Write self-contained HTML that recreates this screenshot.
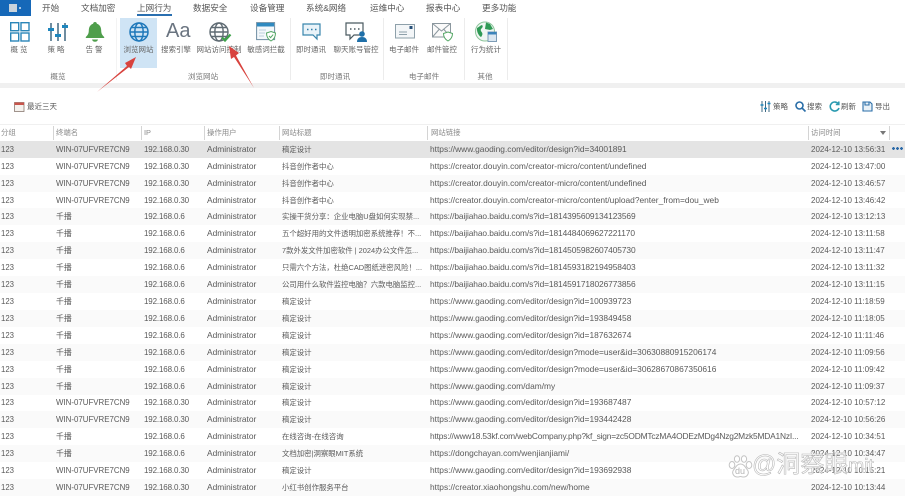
<!DOCTYPE html>
<html lang="zh"><head><meta charset="utf-8"><title>上网行为</title>
<style>
html,body{margin:0;padding:0;width:905px;height:500px;overflow:hidden;background:#fff}
body{position:relative;font-family:"Liberation Sans","Noto Sans CJK SC",sans-serif;color:#5a5a5a;font-size:7.5px}
#w{position:absolute;left:0;top:0;width:905px;height:500px;filter:blur(.35px)}
.a{position:absolute;white-space:nowrap}
.t{position:absolute;top:1px;font-size:8.6px;line-height:14px;color:#555;white-space:nowrap}
.l{position:absolute;top:44px;font-size:7.5px;line-height:11px;color:#666;white-space:nowrap;text-align:center;transform:translateX(-50%)}
.g{position:absolute;top:71px;font-size:7.6px;line-height:11px;color:#777;white-space:nowrap;transform:translateX(-50%)}
.s{position:absolute;top:18px;width:1px;height:62px;background:#ececec}
.h{position:absolute;top:126px;width:1px;height:14px;background:#d4d4d4}
.ht{position:absolute;top:127px;line-height:12px;font-size:7.4px;color:#8a8a8a;white-space:nowrap}
.r{position:absolute;left:0;width:905px;height:17px;line-height:17px;white-space:nowrap}
.r span{position:absolute;top:0}
.r span:nth-child(1){left:1px;font-size:7.8px}
.r span:nth-child(2){left:56px;font-size:7.9px}
.r span:nth-child(3){left:144px;font-size:8px;letter-spacing:-.15px}
.r span:nth-child(4){left:207px;font-size:8.4px}
.r span:nth-child(5){left:282px;font-size:7.4px}
.r span:nth-child(6){left:430px;font-size:8.4px}
.r span:nth-child(7){left:811px;font-size:8px}
.r.b span:nth-child(6){letter-spacing:-.1px}
.r.k span:nth-child(6){letter-spacing:-.18px}
.z{background:#fafafa}
svg{position:absolute;overflow:visible}
</style></head><body><div id="w">

<div class="a" style="left:0;top:0;width:31px;height:16px;background:#1668b8"></div>
<div class="a" style="left:9px;top:4px;width:8px;height:8px;background:#c9d3dc"></div>
<div class="a" style="left:19px;top:7px;width:2px;height:2px;background:#a9c6e4"></div>
<div class="t" style="left:42px">开始</div>
<div class="t" style="left:81px">文档加密</div>
<div class="t" style="left:137px">上网行为</div>
<div class="a" style="left:137px;top:14px;width:35px;height:2px;background:#2a6fb0"></div>
<div class="t" style="left:193px">数据安全</div>
<div class="t" style="left:250px">设备管理</div>
<div class="t" style="left:306px">系统&amp;网络</div>
<div class="t" style="left:370px">运维中心</div>
<div class="t" style="left:426px">报表中心</div>
<div class="t" style="left:482px">更多功能</div>

<div class="a" style="left:120px;top:18px;width:37px;height:50px;background:#cfe4f5"></div>
<div class="s" style="left:116px;background:#f3f3f3"></div><div class="s" style="left:290px"></div><div class="s" style="left:383px"></div><div class="s" style="left:464px"></div><div class="s" style="left:507px"></div>
<div class="a" style="left:0;top:83px;width:905px;height:5px;background:#f0f0f0"></div>

<!-- icons -->
<svg style="left:10px;top:22px" width="20" height="20" fill="none" stroke="#2b86b8" stroke-width="1.4"><rect x=".7" y=".7" width="8" height="8"/><rect x="11" y=".7" width="8" height="8"/><rect x=".7" y="11" width="8" height="8"/><rect x="11" y="11" width="8" height="8"/></svg>
<svg style="left:48px;top:22px" width="20" height="20" stroke="#24506e" stroke-width="1.3" fill="#1e86bd"><path d="M3 1V19M10 1V19M17 1V19" fill="none"/><rect x="0" y="6" width="6" height="3" stroke="none"/><rect x="7" y="12" width="6" height="3" stroke="none"/><rect x="14" y="3" width="6" height="3" stroke="none"/></svg>
<svg style="left:85px;top:22px" width="20" height="20" fill="#4f9e4c"><path d="M10 0c1.2 0 1.8.8 1.9 1.8 3 .9 4.2 3.6 4.3 6.6 0 3.500 1.300 5 3 6.600v1H.8v-1c1.700-1.600 3-3.100 3-6.600.1-3 1.300-5.700 4.300-6.600C8.200.8 8.800 0 10 0z"/><path d="M7 17.500h6c-.4 1.500-1.500 2.300-3 2.300s-2.600-.8-3-2.300z"/></svg>
<svg style="left:129px;top:22px" width="20" height="20" fill="none" stroke="#1f78ba" stroke-width="1.500"><circle cx="10" cy="10" r="9"/><ellipse cx="10" cy="10" rx="4.200" ry="9"/><path d="M1 10H19M2.400 5.500H17.600M2.400 14.500H17.600"/></svg>
<div class="a" style="left:166px;top:19px;font-size:20px;line-height:24px;color:#6a7480">Aa</div>
<svg style="left:209px;top:22px" width="23" height="21" fill="none" stroke="#5f6b73" stroke-width="1.400"><circle cx="10" cy="10" r="9"/><ellipse cx="10" cy="10" rx="4.200" ry="9"/><path d="M1 10H19M2.400 5.500H17.600M2.400 14.500H17.600"/><path d="M13 15.500l3 3 5.500-6" stroke="#3ea24a" stroke-width="2.200"/></svg>
<svg style="left:256px;top:22px" width="21" height="21" fill="none"><rect x=".6" y=".6" width="18" height="17" fill="#f4f8fb" stroke="#6f8ea3"/><rect x="1" y="1" width="17" height="3.500" fill="#2f8ac0"/><path d="M3 8H10M3 11H9M3 14H8" stroke="#bcd0dd"/><path d="M15 9.500l4.500 1.500c0 4-1.800 6.500-4.500 8-2.700-1.500-4.500-4-4.500-8z" fill="#fff" stroke="#55a866"/><path d="M13 14l1.600 1.600 2.600-3" stroke="#55a866"/></svg>
<svg style="left:302px;top:23px" width="20" height="18" fill="#e9f3f9" stroke="#3a86ad" stroke-width="1.200"><path d="M1 1H18V12H15V16L11 12H1z"/><path d="M5 6.500h1.500M9 6.500h1.500M13 6.500h1.500" stroke="#2f7da8" stroke-width="1.600" fill="none"/></svg>
<svg style="left:345px;top:22px" width="22" height="20" fill="#fff" stroke="#4b5a60" stroke-width="1.200"><path d="M1 1H18V13H9L5 17V13H1z"/><path d="M5 7h1.500M9 7h1.500M13 7h1.500" stroke="#4b5a60" stroke-width="1.600" fill="none"/><circle cx="17" cy="12" r="2.800" fill="#1f6fa8" stroke="none"/><path d="M12 20c0-3.500 2-5 5-5s5 1.500 5 5z" fill="#1f6fa8" stroke="none"/></svg>
<svg style="left:395px;top:24px" width="20" height="15" fill="#f3f6f8" stroke="#8ea0aa"><rect x=".5" y=".5" width="19" height="13.500"/><rect x="14.500" y="2" width="3" height="3" fill="#274f78" stroke="none"/><path d="M4 8H12M4 10.500H12" fill="none"/></svg>
<svg style="left:432px;top:23px" width="22" height="19" fill="#fafafa" stroke="#8b979e"><rect x=".5" y=".5" width="18" height="13.500"/><path d="M.5 .5L9.500 8 18.500 .5M.5 14L7 6.500M18.500 14L12 6.500" fill="none"/><path d="M16 9l4.500 1.500c0 3.500-1.800 6-4.500 7.500-2.700-1.500-4.500-4-4.500-7.500z" fill="#fff" stroke="#55a866"/></svg>
<svg style="left:475px;top:21px" width="22" height="22"><circle cx="10" cy="10.500" r="9.500" fill="#f0f6f2" stroke="#8cc49a"/><path d="M2 7c2-1 4-3 5-3 1 1 1 2-.5 3.500C5 9 6 10 7 11.500 8 13 7 15 6 16 4 15 1.500 11 2 7z" fill="#2f9a55"/><path d="M11 1.500l4 1.500 3 5-3 1-5-1z" fill="#2f9a55"/><rect x="13" y="11" width="8.500" height="9.500" fill="#dbe7f1" stroke="#7c9bb5"/><rect x="13" y="11" width="8.500" height="2.500" fill="#3c84bb"/></svg>

<div class="l" style="left:20px;letter-spacing:2px">概览</div>
<div class="l" style="left:57px;letter-spacing:2px">策略</div>
<div class="l" style="left:95px;letter-spacing:2px">告警</div>
<div class="l" style="left:138.500px">浏览网站</div>
<div class="l" style="left:176px">搜索引擎</div>
<div class="l" style="left:219px">网站访问控制</div>
<div class="l" style="left:266px">敏感词拦截</div>
<div class="l" style="left:311px">即时通讯</div>
<div class="l" style="left:356px">聊天账号管控</div>
<div class="l" style="left:404px">电子邮件</div>
<div class="l" style="left:442px">邮件管控</div>
<div class="l" style="left:486px">行为统计</div>
<div class="g" style="left:58px">概览</div>
<div class="g" style="left:203px">浏览网站</div>
<div class="g" style="left:335px">即时通讯</div>
<div class="g" style="left:424px">电子邮件</div>
<div class="g" style="left:485px">其他</div>

<!-- arrows -->
<svg style="left:0;top:0" width="905" height="100"><path d="M97 92L127 66 125 63 136 57 131 69 129 67z" fill="#d8433e"/><path d="M254 88L234 57 231 59 229 46 239 53 236 55.500z" fill="#d8433e"/></svg>

<!-- toolbar -->
<svg style="left:14px;top:101px" width="11" height="11" fill="#f5f2ee" stroke="#8a7a72" stroke-width=".8"><rect x=".5" y="1.500" width="9.500" height="9"/><rect x=".5" y="1.500" width="9.500" height="2.500" fill="#c8554c" stroke="none"/></svg>
<div class="a" style="left:27px;top:101px;line-height:12px;color:#555">最近三天</div>
<svg style="left:760px;top:101px" width="11" height="11" stroke="#3f6b85" fill="none"><path d="M2 0V11M5.500 0V11M9 0V11"/><path d="M.5 4H3.500M4 7.500H7M7.500 2.500H10.500" stroke="#1e86bd" stroke-width="1.500"/></svg>
<div class="a" style="left:773px;top:101px;line-height:12px;color:#555">策略</div>
<svg style="left:795px;top:101px" width="11" height="11" fill="none" stroke="#2a6ea8" stroke-width="1.600"><circle cx="4.500" cy="4.500" r="3.500"/><path d="M7 7L10.500 10.500"/></svg>
<div class="a" style="left:807px;top:101px;line-height:12px;color:#555">搜索</div>
<svg style="left:829px;top:101px" width="11" height="11" fill="none" stroke="#2a9ab0" stroke-width="1.600"><path d="M9.500 3A4.500 4.500 0 1 0 10 7"/><path d="M9.800 .5V3.500H6.800"/></svg>
<div class="a" style="left:841px;top:101px;line-height:12px;color:#555">刷新</div>
<svg style="left:862px;top:101px" width="11" height="11" fill="#e9f1f7" stroke="#2a6ea8" stroke-width="1.100"><path d="M1 1H8L10 3V10H1z"/><path d="M3 1V4H7V1" fill="none"/></svg>
<div class="a" style="left:875px;top:101px;line-height:12px;color:#555">导出</div>

<!-- header -->
<div class="a" style="left:0;top:124px;width:905px;height:1px;background:#f0f0f0"></div>
<div class="a" style="left:0;top:141px;width:905px;height:1px;background:#c4c4c4"></div>
<div class="h" style="left:53px"></div><div class="h" style="left:141px"></div><div class="h" style="left:204px"></div><div class="h" style="left:279px"></div><div class="h" style="left:427px"></div><div class="h" style="left:808px"></div><div class="h" style="left:889px"></div>
<div class="ht" style="left:1px">分组</div><div class="ht" style="left:56px">终端名</div><div class="ht" style="left:144px">IP</div><div class="ht" style="left:207px">操作用户</div><div class="ht" style="left:282px">网站标题</div><div class="ht" style="left:431px">网站链接</div><div class="ht" style="left:811px">访问时间</div>
<div class="a" style="left:880px;top:131px;width:0;height:0;border:3px solid transparent;border-top:4px solid #777"></div>

<!-- rows -->
<div class="r" style="top:141px;background:#e4e4e4;height:17px"><span>123</span><span>WIN-07UFVRE7CN9</span><span>192.168.0.30</span><span>Administrator</span><span>稿定设计</span><span>https://www.gaoding.com/editor/design?id=34001891</span><span>2024-12-10 13:56:31</span></div>
<div class="a" style="left:892px;top:147px;width:11px;height:3px;background:radial-gradient(circle at 1.500px 1.500px,#2c6aa8 1.300px,transparent 1.500px) 0 0/4px 3px"></div>
<div class="r" style="top:158px"><span>123</span><span>WIN-07UFVRE7CN9</span><span>192.168.0.30</span><span>Administrator</span><span>抖音创作者中心</span><span>https://creator.douyin.com/creator-micro/content/undefined</span><span>2024-12-10 13:47:00</span></div>
<div class="r z" style="top:175px"><span>123</span><span>WIN-07UFVRE7CN9</span><span>192.168.0.30</span><span>Administrator</span><span>抖音创作者中心</span><span>https://creator.douyin.com/creator-micro/content/undefined</span><span>2024-12-10 13:46:57</span></div>
<div class="r" style="top:192px"><span>123</span><span>WIN-07UFVRE7CN9</span><span>192.168.0.30</span><span>Administrator</span><span>抖音创作者中心</span><span>https://creator.douyin.com/creator-micro/content/upload?enter_from=dou_web</span><span>2024-12-10 13:46:42</span></div>
<div class="r z b" style="top:208px"><span>123</span><span>千播</span><span>192.168.0.6</span><span>Administrator</span><span>实操干货分享：企业电脑U盘如何实现禁...</span><span>https://baijiahao.baidu.com/s?id=1814395609134123569</span><span>2024-12-10 13:12:13</span></div>
<div class="r b" style="top:225px"><span>123</span><span>千播</span><span>192.168.0.6</span><span>Administrator</span><span>五个超好用的文件透明加密系统推荐！不...</span><span>https://baijiahao.baidu.com/s?id=1814484069627221170</span><span>2024-12-10 13:11:58</span></div>
<div class="r z b" style="top:242px"><span>123</span><span>千播</span><span>192.168.0.6</span><span>Administrator</span><span>7款外发文件加密软件 | 2024办公文件怎...</span><span>https://baijiahao.baidu.com/s?id=1814505982607405730</span><span>2024-12-10 13:11:47</span></div>
<div class="r b" style="top:259px"><span>123</span><span>千播</span><span>192.168.0.6</span><span>Administrator</span><span>只需六个方法，杜绝CAD图纸泄密风险！...</span><span>https://baijiahao.baidu.com/s?id=1814593182194958403</span><span>2024-12-10 13:11:32</span></div>
<div class="r z b" style="top:276px"><span>123</span><span>千播</span><span>192.168.0.6</span><span>Administrator</span><span>公司用什么软件监控电脑？六款电脑监控...</span><span>https://baijiahao.baidu.com/s?id=1814591718026773856</span><span>2024-12-10 13:11:15</span></div>
<div class="r" style="top:293px"><span>123</span><span>千播</span><span>192.168.0.6</span><span>Administrator</span><span>稿定设计</span><span>https://www.gaoding.com/editor/design?id=100939723</span><span>2024-12-10 11:18:59</span></div>
<div class="r z" style="top:310px"><span>123</span><span>千播</span><span>192.168.0.6</span><span>Administrator</span><span>稿定设计</span><span>https://www.gaoding.com/editor/design?id=193849458</span><span>2024-12-10 11:18:05</span></div>
<div class="r" style="top:327px"><span>123</span><span>千播</span><span>192.168.0.6</span><span>Administrator</span><span>稿定设计</span><span>https://www.gaoding.com/editor/design?id=187632674</span><span>2024-12-10 11:11:46</span></div>
<div class="r z" style="top:344px"><span>123</span><span>千播</span><span>192.168.0.6</span><span>Administrator</span><span>稿定设计</span><span>https://www.gaoding.com/editor/design?mode=user&amp;id=30630880915206174</span><span>2024-12-10 11:09:56</span></div>
<div class="r" style="top:361px"><span>123</span><span>千播</span><span>192.168.0.6</span><span>Administrator</span><span>稿定设计</span><span>https://www.gaoding.com/editor/design?mode=user&amp;id=30628670867350616</span><span>2024-12-10 11:09:42</span></div>
<div class="r z" style="top:378px"><span>123</span><span>千播</span><span>192.168.0.6</span><span>Administrator</span><span>稿定设计</span><span>https://www.gaoding.com/dam/my</span><span>2024-12-10 11:09:37</span></div>
<div class="r" style="top:394px"><span>123</span><span>WIN-07UFVRE7CN9</span><span>192.168.0.30</span><span>Administrator</span><span>稿定设计</span><span>https://www.gaoding.com/editor/design?id=193687487</span><span>2024-12-10 10:57:12</span></div>
<div class="r z" style="top:411px"><span>123</span><span>WIN-07UFVRE7CN9</span><span>192.168.0.30</span><span>Administrator</span><span>稿定设计</span><span>https://www.gaoding.com/editor/design?id=193442428</span><span>2024-12-10 10:56:26</span></div>
<div class="r k" style="top:428px"><span>123</span><span>千播</span><span>192.168.0.6</span><span>Administrator</span><span>在线咨询-在线咨询</span><span>https://www18.53kf.com/webCompany.php?kf_sign=zc5ODMTczMA4ODEzMDg4Nzg2Mzk5MDA1NzI...</span><span>2024-12-10 10:34:51</span></div>
<div class="r z" style="top:445px"><span>123</span><span>千播</span><span>192.168.0.6</span><span>Administrator</span><span>文档加密|洞察眼MIT系统</span><span>https://dongchayan.com/wenjianjiami/</span><span>2024-12-10 10:34:47</span></div>
<div class="r" style="top:462px"><span>123</span><span>WIN-07UFVRE7CN9</span><span>192.168.0.30</span><span>Administrator</span><span>稿定设计</span><span>https://www.gaoding.com/editor/design?id=193692938</span><span>2024-12-10 10:15:21</span></div>
<div class="r z" style="top:479px"><span>123</span><span>WIN-07UFVRE7CN9</span><span>192.168.0.30</span><span>Administrator</span><span>小红书创作服务平台</span><span>https://creator.xiaohongshu.com/new/home</span><span>2024-12-10 10:13:44</span></div>

<!-- watermark -->
<svg style="left:728px;top:455px" width="24" height="26" fill="#fff" stroke="#c4c4c4" stroke-width="1"><ellipse cx="4" cy="10" rx="2.800" ry="3.500"/><ellipse cx="9" cy="4" rx="2.600" ry="3.200"/><ellipse cx="16" cy="4" rx="2.600" ry="3.200"/><ellipse cx="21" cy="10" rx="2.800" ry="3.500"/><path d="M12.500 9c4 0 5 4 7 6 2 3 0 7-4 7-1.500 0-2-.5-3-.5s-1.500.5-3 .5c-4 0-6-4-4-7 2-2 3-6 7-6z"/></svg>
<div class="a" style="left:735px;top:466px;font-size:9px;line-height:10px;color:#b4b4b4">du</div>
<div class="a" style="left:752px;top:451px;font-size:24px;line-height:28px;color:rgba(255,255,255,.7);-webkit-text-stroke:.6px #b8b8b8">@洞察眼<span style="font-size:19px">mit</span></div>
</div></body></html>
